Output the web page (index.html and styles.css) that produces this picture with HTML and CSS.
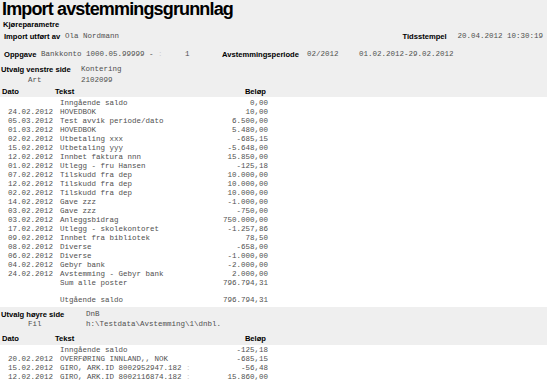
FILE: index.html
```html
<!DOCTYPE html>
<html lang="no">
<head>
<meta charset="utf-8">
<title>Import avstemmingsgrunnlag</title>
<link rel="stylesheet" href="styles.css">
</head>
<body>
<div class="band top">
  <h1 class="title">Import avstemmingsgrunnlag</h1>
  <div class="line sub"><span class="lbl">Kjøreparametre</span></div>
  <div class="line r-import">
    <span class="lbl w-import">Import utført av</span>
    <span class="mono grow">Ola Nordmann</span>
    <span class="lbl w-tid">Tidsstempel</span>
    <span class="mono">20.04.2012 10:30:19</span>
  </div>
  <div class="line r-oppg">
    <span class="lbl w-oppg">Oppgave</span>
    <span class="mono w-bank">Bankkonto 1000.05.99999 - <span class="faint">:</span>     1</span>
    <span class="lbl w-avst">Avstemmingsperiode</span>
    <span class="mono w-per">02/2012</span>
    <span class="mono">01.02.2012-29.02.2012</span>
  </div>
  <div class="line r-utv">
    <span class="lbl w-utv">Utvalg venstre side</span>
    <span class="mono">Kontering</span>
  </div>
  <div class="line r-art">
    <span class="mono w-art">Art</span>
    <span class="mono">2102099</span>
  </div>
  <div class="head">
    <span class="lbl">Dato</span>
    <span class="lbl">Tekst</span>
    <span class="lbl right">Beløp</span>
  </div>
</div>

<div class="rows">
  <div class="row"><span></span><span>Inngående saldo</span><span class="amt">0,00</span></div>
  <div class="row"><span>24.02.2012</span><span>HOVEDBOK</span><span class="amt">10,00</span></div>
  <div class="row"><span>05.03.2012</span><span>Test avvik periode/dato</span><span class="amt">6.500,00</span></div>
  <div class="row"><span>01.03.2012</span><span>HOVEDBOK</span><span class="amt">5.480,00</span></div>
  <div class="row"><span>02.02.2012</span><span>Utbetaling xxx</span><span class="amt">-685,15</span></div>
  <div class="row"><span>15.02.2012</span><span>Utbetaling yyy</span><span class="amt">-5.648,00</span></div>
  <div class="row"><span>12.02.2012</span><span>Innbet faktura nnn</span><span class="amt">15.850,00</span></div>
  <div class="row"><span>01.02.2012</span><span>Utlegg - fru Hansen</span><span class="amt">-125,18</span></div>
  <div class="row"><span>07.02.2012</span><span>Tilskudd fra dep</span><span class="amt">10.000,00</span></div>
  <div class="row"><span>12.02.2012</span><span>Tilskudd fra dep</span><span class="amt">10.000,00</span></div>
  <div class="row"><span>02.02.2012</span><span>Tilskudd fra dep</span><span class="amt">10.000,00</span></div>
  <div class="row"><span>14.02.2012</span><span>Gave zzz</span><span class="amt">-1.000,00</span></div>
  <div class="row"><span>03.02.2012</span><span>Gave zzz</span><span class="amt">-750,00</span></div>
  <div class="row"><span>03.02.2012</span><span>Anleggsbidrag</span><span class="amt">750.000,00</span></div>
  <div class="row"><span>17.02.2012</span><span>Utlegg - skolekontoret</span><span class="amt">-1.257,86</span></div>
  <div class="row"><span>09.02.2012</span><span>Innbet fra bibliotek</span><span class="amt">78,50</span></div>
  <div class="row"><span>08.02.2012</span><span>Diverse</span><span class="amt">-658,00</span></div>
  <div class="row"><span>06.02.2012</span><span>Diverse</span><span class="amt">-1.000,00</span></div>
  <div class="row"><span>04.02.2012</span><span>Gebyr bank</span><span class="amt">-2.000,00</span></div>
  <div class="row"><span>24.02.2012</span><span>Avstemming - Gebyr bank</span><span class="amt">2.000,00</span></div>
  <div class="row"><span></span><span>Sum alle poster</span><span class="amt">796.794,31</span></div>
  <div class="row total"><span></span><span>Utgående saldo</span><span class="amt">796.794,31</span></div>
</div>

<div class="band mid">
  <div class="line r-utv2">
    <span class="lbl w-utv2">Utvalg høyre side</span>
    <span class="mono">DnB</span>
  </div>
  <div class="line r-fil">
    <span class="mono w-fil">Fil</span>
    <span class="mono">h:\Testdata\Avstemming\1\dnbl.</span>
  </div>
  <div class="head head2">
    <span class="lbl">Dato</span>
    <span class="lbl">Tekst</span>
    <span class="lbl right">Beløp</span>
  </div>
</div>

<div class="rows rows2">
  <div class="row"><span></span><span>Inngående saldo</span><span class="amt">-125,18</span></div>
  <div class="row"><span>20.02.2012</span><span>OVERFØRING INNLAND,, NOK</span><span class="amt">-685,15</span></div>
  <div class="row"><span>15.02.2012</span><span>GIRO, ARK.ID 8002952947.182 <span class="faint">:</span></span><span class="amt">-56,48</span></div>
  <div class="row"><span>12.02.2012</span><span>GIRO, ARK.ID 8002116874.182 <span class="faint">:</span></span><span class="amt">15.860,00</span></div>
  <div class="row"><span>10.02.2012</span><span>GIRO, ARK.ID 8002116875.182 <span class="faint">:</span></span><span class="amt">10.000,00</span></div>
</div>
</body>
</html>
```

FILE: styles.css
```css
html, body {
  margin: 0;
  padding: 0;
  background: #ffffff;
}

body {
  width: 547px;
  height: 383px;
  overflow: hidden;
}

.band {
  background: #efefef;
}

.top {
  height: 97px;
}

.title {
  margin: 0;
  height: 18px;
  padding-left: 2px;
  font: bold 18px/18px "Liberation Sans", Arial, sans-serif;
  letter-spacing: -0.85px;
  color: #000;
}

.lbl {
  font-family: "Liberation Sans", Arial, sans-serif;
  font-weight: bold;
  font-size: 7.6px;
  color: #000;
  white-space: nowrap;
}

.mono {
  font-family: "Liberation Mono", "Courier New", monospace;
  font-size: 7.5px;
  color: #505050;
  white-space: pre;
}

.faint {
  color: #d0d0d0;
}

.line {
  display: flex;
  align-items: center;
}

.sub {
  height: 12px;
  padding-left: 3px;
}

.r-import {
  height: 12px;
  padding-left: 4px;
  padding-right: 4px;
}

.w-import { width: 61px; flex: none; }
.grow { flex: 1; }
.w-tid { width: 55px; flex: none; }

.r-oppg {
  height: 12px;
  margin-top: 6px;
  padding-left: 4px;
}

.w-oppg { width: 37px; flex: none; }
.w-bank { width: 181px; flex: none; }
.w-avst { width: 85px; flex: none; }
.w-per { width: 52px; flex: none; }

.r-utv {
  height: 12px;
  margin-top: 3px;
  padding-left: 1px;
}

.w-utv { width: 80px; flex: none; }

.r-art {
  height: 9px;
  padding-left: 28px;
}

.w-art { width: 53px; flex: none; }

.head {
  display: grid;
  grid-template-columns: 53px 1fr auto;
  align-items: center;
  width: 264px;
  height: 11px;
  margin-top: 2px;
  padding-left: 2px;
}

.right {
  text-align: right;
}

.rows {
  padding-top: 2px;
  padding-left: 8px;
  width: 260px;
  font-family: "Liberation Mono", "Courier New", monospace;
  font-size: 7.5px;
  color: #505050;
}

.row {
  display: grid;
  grid-template-columns: 52px 1fr auto;
  height: 9px;
  line-height: 9px;
  white-space: pre;
}

.amt {
  text-align: right;
}

.total {
  margin-top: 8px;
}

.mid {
  margin-top: 2px;
  height: 38px;
  padding-top: 2px;
  box-sizing: border-box;
}

.r-utv2 {
  height: 10px;
  padding-left: 1px;
}

.w-utv2 { width: 85px; flex: none; }

.r-fil {
  height: 10px;
  padding-left: 28px;
}

.w-fil { width: 58px; flex: none; }

.head2 {
  height: 10px;
  margin-top: 4px;
}

.rows2 {
  padding-top: 1px;
}
```
